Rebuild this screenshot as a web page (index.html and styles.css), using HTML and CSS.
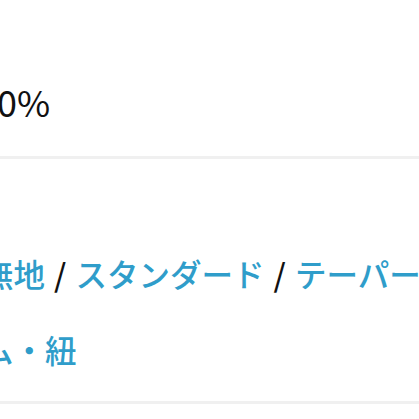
FILE: index.html
```html
<!DOCTYPE html>
<html>
<head>
    <title>Spec</title>
    <link rel="stylesheet" href="styles.css">
</head>
<body>
    <div class="page">
        <div class="row rate">
            <span class="value">0%</span>
        </div>
        <div class="row options">
            <div class="line">
                <a href="#">無地</a> <span class="sep">/</span> <a href="#">スタンダード</a> <span class="sep">/</span> <a href="#">テーパード</a>
            </div>
            <div class="line">
                <a href="#">ム・紐</a>
            </div>
        </div>
    </div>
</body>
</html>
```
FILE: styles.css
```css
body {
    margin: 0;
    background: #fff;
    font-family: "Noto Sans CJK JP", "Noto Sans", sans-serif;
    overflow: hidden;
}
.page {
    width: 419px;
    height: 419px;
    overflow: hidden;
}
.row {
    border-bottom: 3px solid #f0f0f0;
}
.rate {
    padding: 79px 0 32px;
}
.value {
    display: block;
    margin-left: -3px;
    font-size: 36px;
    line-height: 45px;
    color: #111;
}
.options {
    padding: 76px 0 14px;
}
.line {
    margin-left: -18px;
    font-size: 31.5px;
    font-weight: 500;
    line-height: 76px;
    white-space: nowrap;
    color: #111;
}
.line a {
    color: #2f9dca;
    text-decoration: none;
}
.sep {
    margin: 0 2px;
}
```
